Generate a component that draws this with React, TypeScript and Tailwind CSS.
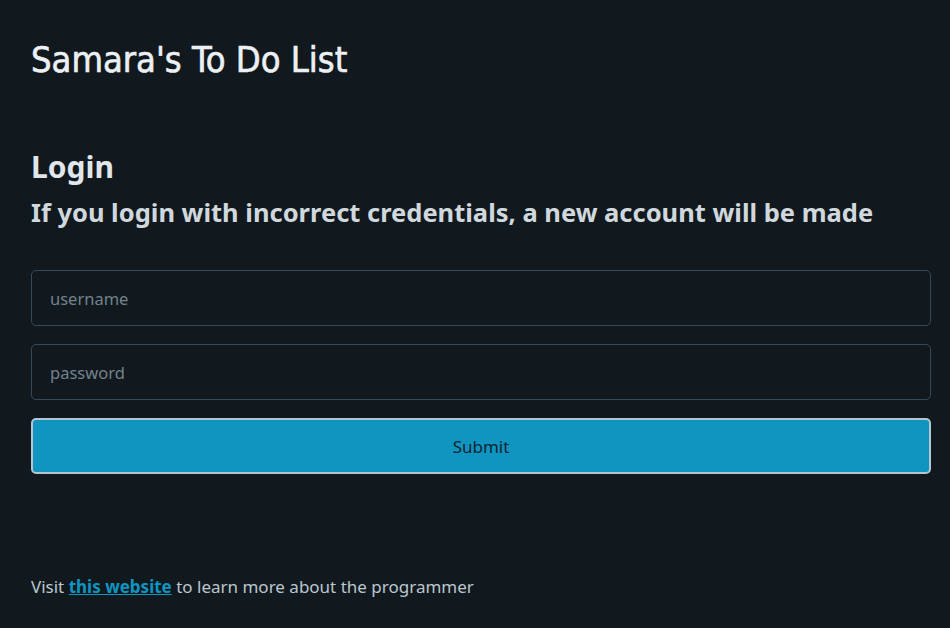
import React from 'react';

const App = () => {
    return (
        <div className="min-h-screen w-full bg-[#11191f] px-[31px] font-['Noto_Sans',sans-serif] text-[#bbc6ce]">
            {/* 헤더 */}
            <header className="pt-[36px]">
                <h1 className="font-['DejaVu_Sans_Condensed','DejaVu_Sans',sans-serif] text-[36px] font-normal leading-[48px] text-[#edf0f3] [font-stretch:condensed] [-webkit-text-stroke:0.6px_#edf0f3]">
                    Samara's To Do List
                </h1>
            </header>

            {/* 로그인 폼 */}
            <main className="mt-[63px] w-[900px]">
                <h2 className="text-[30px] font-bold leading-[40px] text-[#e1e6eb]">Login</h2>
                <h3 className="mt-[8px] text-[25.5px] font-bold leading-[34px] text-[#d0d8de]">
                    If you login with incorrect credentials, a new account will be made
                </h3>
                <form className="mt-[41px] flex flex-col gap-[18px]" onSubmit={(e) => e.preventDefault()}>
                    <input
                        type="text"
                        placeholder="username"
                        className="h-[56px] w-full rounded-[5px] border border-[#374956] bg-transparent px-[18px] text-[16.5px] text-[#bbc6ce] outline-none placeholder:text-[#73828c]"
                    />
                    <input
                        type="password"
                        placeholder="password"
                        className="h-[56px] w-full rounded-[5px] border border-[#374956] bg-transparent px-[18px] text-[16.5px] text-[#bbc6ce] outline-none placeholder:text-[#73828c]"
                    />
                    <button
                        type="submit"
                        className="h-[56px] w-full rounded-[5px] border-2 border-[#b3c5d1] bg-[#1095c1] pt-[2px] text-[17px] text-[#0f2430]"
                    >
                        Submit
                    </button>
                </form>
            </main>

            {/* 푸터 */}
            <footer className="mt-[100px] text-[17px] leading-[26px]">
                Visit{' '}
                <a href="#" className="font-bold text-[#1095c1] underline">
                    this website
                </a>{' '}
                to learn more about the programmer
            </footer>
        </div>
    );
};

export default App;
